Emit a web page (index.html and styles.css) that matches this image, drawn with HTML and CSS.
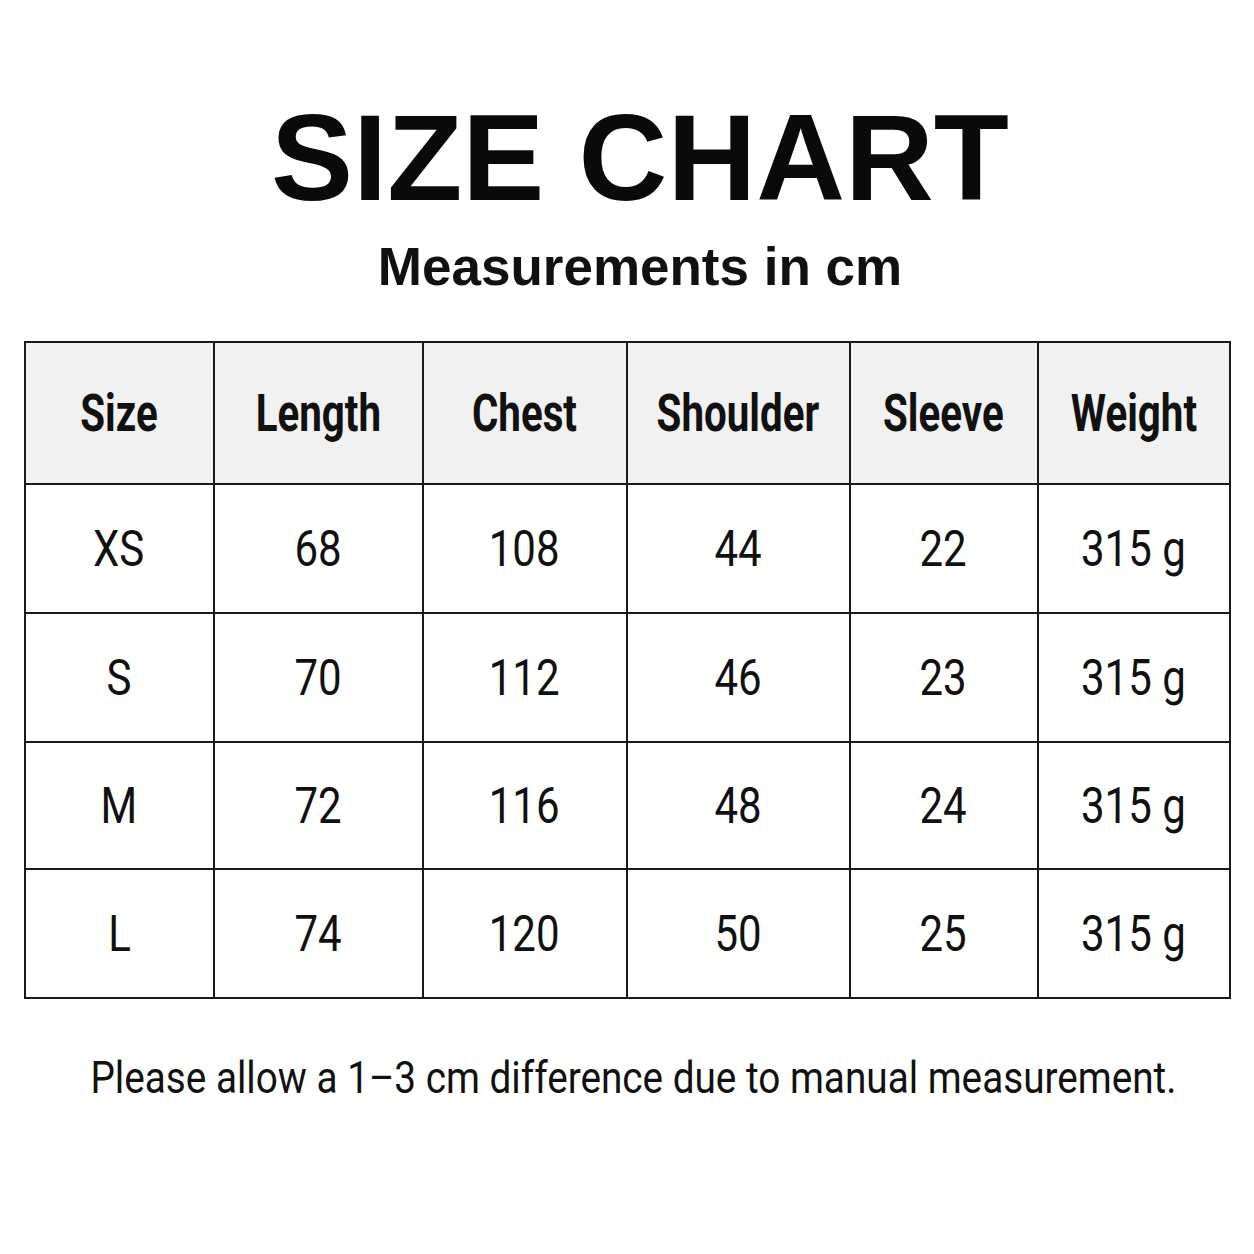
FILE: index.html
```html
<!DOCTYPE html>
<html>
<head>
<meta charset="utf-8">
<link rel="stylesheet" href="styles.css">
</head>
<body>
<main class="page">
  <h1 class="title">SIZE CHART</h1>
  <p class="subtitle">Measurements in cm</p>
  <table class="chart">
    <colgroup>
      <col class="c1"><col class="c2"><col class="c3"><col class="c4"><col class="c5"><col class="c6">
    </colgroup>
    <thead>
      <tr>
        <th><span class="sq">Size</span></th><th><span class="sq">Length</span></th><th><span class="sq">Chest</span></th><th><span class="sq">Shoulder</span></th><th><span class="sq">Sleeve</span></th><th><span class="sq">Weight</span></th>
      </tr>
    </thead>
    <tbody>
      <tr><td><span class="sq">XS</span></td><td><span class="sq">68</span></td><td><span class="sq">108</span></td><td><span class="sq">44</span></td><td><span class="sq">22</span></td><td><span class="sq">315 g</span></td></tr>
      <tr><td><span class="sq">S</span></td><td><span class="sq">70</span></td><td><span class="sq">112</span></td><td><span class="sq">46</span></td><td><span class="sq">23</span></td><td><span class="sq">315 g</span></td></tr>
      <tr class="short"><td><span class="sq">M</span></td><td><span class="sq">72</span></td><td><span class="sq">116</span></td><td><span class="sq">48</span></td><td><span class="sq">24</span></td><td><span class="sq">315 g</span></td></tr>
      <tr><td><span class="sq">L</span></td><td><span class="sq">74</span></td><td><span class="sq">120</span></td><td><span class="sq">50</span></td><td><span class="sq">25</span></td><td><span class="sq">315 g</span></td></tr>
    </tbody>
  </table>
  <p class="note"><span class="sq">Please allow a 1–3 cm difference due to manual measurement.</span></p>
</main>
</body>
</html>
```

FILE: styles.css
```css
html, body {
  margin: 0;
  padding: 0;
  background: #ffffff;
}
.page {
  width: 1254px;
  height: 1254px;
  display: flex;
  flex-direction: column;
  align-items: center;
  color: #111;
  font-family: Roboto, "Liberation Sans", sans-serif;
}
.sq {
  display: inline-block;
  white-space: nowrap;
  transform: scaleX(0.79);
  transform-origin: center;
}
.title {
  margin: 88px 0 0 26px;
  font-family: "Liberation Sans", Arial, sans-serif;
  font-weight: 700;
  font-size: 123px;
  line-height: 140px;
  letter-spacing: 0;
  color: #0a0a0a;
}
.subtitle {
  margin: 9px 0 0 26px;
  font-family: "Liberation Sans", Arial, sans-serif;
  font-weight: 700;
  font-size: 53px;
  line-height: 60px;
  color: #111;
}
.chart {
  margin-top: 44px;
  border-collapse: collapse;
  border: 2px solid #1a1a1a;
  table-layout: fixed;
}
.c1 { width: 189px; }
.c2 { width: 209px; }
.c3 { width: 204px; }
.c4 { width: 223px; }
.c5 { width: 188px; }
.c6 { width: 192px; }
.chart th, .chart td {
  border: 2px solid #1a1a1a;
  text-align: center;
  vertical-align: middle;
  padding: 0;
  color: #111;
}
.chart th {
  background: #f1f1f1;
  font-weight: 700;
  font-size: 51px;
  height: 140px;
}
.chart td {
  font-weight: 400;
  font-size: 50px;
  height: 127px;
}
.chart td .sq {
  transform: scaleX(0.84);
}
.chart .short td {
  height: 125px;
}
.note {
  margin: 54px 0 0 12px;
  font-size: 45px;
  line-height: 50px;
  color: #111;
}
.note .sq {
  transform: scaleX(0.86);
}
```
